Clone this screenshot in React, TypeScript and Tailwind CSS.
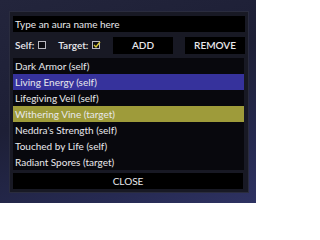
import React from 'react';

const auras = [
  { name: 'Dark Armor (self)', tone: '' },
  { name: 'Living Energy (self)', tone: 'bg-[#36329c]' },
  { name: 'Lifegiving Veil (self)', tone: '' },
  { name: 'Withering Vine (target)', tone: 'bg-[#9e9b3a]' },
  { name: "Neddra's Strength (self)", tone: '' },
  { name: 'Touched by Life (self)', tone: '' },
  { name: 'Radiant Spores (target)', tone: '' },
];

const Checkbox: React.FC<{ checked?: boolean }> = ({ checked }) => (
  <span className="relative inline-block w-[8px] h-[8px] border border-[#b8b8c0] bg-[#0c0c12]">
    {checked && (
      <svg className="absolute left-[0px] top-[-1px]" width="8" height="8" viewBox="0 0 8 8">
        <path d="M1 4 L3 6 L7 1" stroke="#d8c838" strokeWidth="1.4" fill="none" />
      </svg>
    )}
  </span>
);

export default function App() {
  return (
    <div
      className="w-[256px] h-[203px] overflow-hidden pt-[11px] pl-[9px] bg-[linear-gradient(160deg,#23253c_0%,#1d1f36_45%,#262a52_80%,#2e3262_100%)] text-[#e8e8ec] text-[10px] leading-none"
      style={{ fontFamily: 'Lato, "Liberation Sans", sans-serif' }}
    >
      <div className="w-[240px] h-[182px] bg-[#181924] border border-[#2a2c3e] p-[3px] pt-[4px] flex flex-col">
        <div className="h-[16px] bg-black flex items-center pl-[2px]">Type an aura name here</div>

        <div className="h-[17px] mt-[5px] flex items-center">
          <span className="ml-[2px] font-semibold">Self:</span>
          <span className="ml-[4px] flex"><Checkbox /></span>
          <span className="ml-[12px] font-semibold">Target:</span>
          <span className="ml-[4px] flex"><Checkbox checked /></span>
          <div className="ml-auto flex gap-[12px]">
            <button className="w-[60px] h-[17px] bg-black flex items-center justify-center font-semibold">ADD</button>
            <button className="w-[60px] h-[17px] bg-black flex items-center justify-center font-semibold">REMOVE</button>
          </div>
        </div>

        <div className="mt-[4px] w-[231px] h-[112px] bg-[#08080d] flex flex-col">
          {auras.map((a) => (
            <div key={a.name} className={`h-[16px] flex items-center pl-[2px] ${a.tone}`}>
              {a.name}
            </div>
          ))}
        </div>

        <button className="mt-[3px] w-[230px] h-[17px] bg-black flex items-center justify-center">CLOSE</button>
      </div>
    </div>
  );
}
